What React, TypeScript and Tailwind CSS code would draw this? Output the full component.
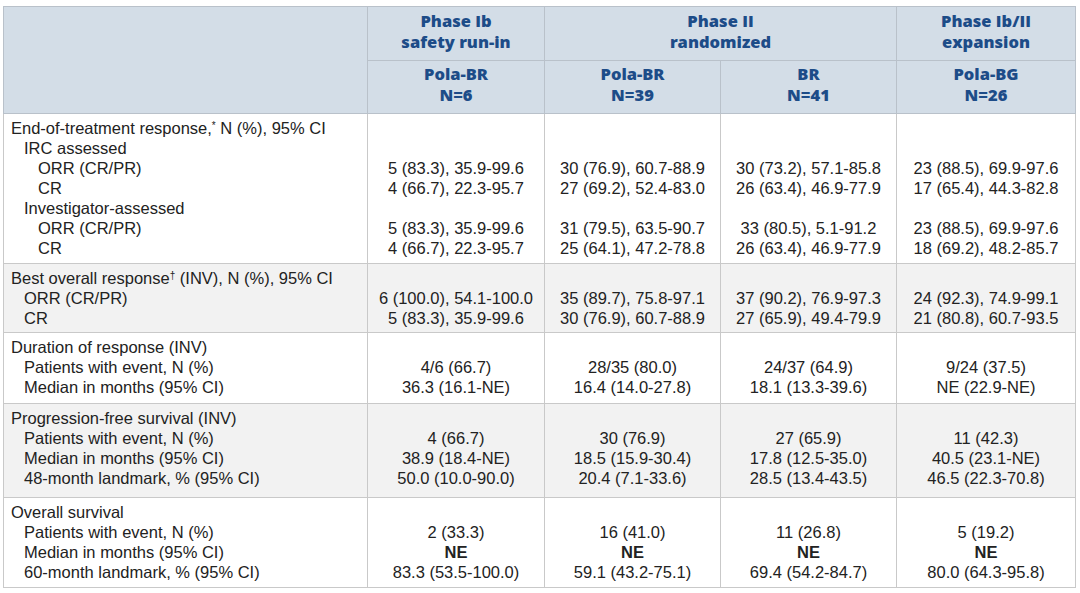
import React from 'react';

type Line = [number, React.ReactNode];

type Section = {
    labels: Line[];
    values: string[][];
    height: string;
    shaded?: boolean;
};

const sections: Section[] = [
    {
        height: 'h-[150px]',
        labels: [
            [0, <>End-of-treatment response,<sup className="text-[10px]">*</sup> N (%), 95% CI</>],
            [1, 'IRC assessed'],
            [2, 'ORR (CR/PR)'],
            [2, 'CR'],
            [1, 'Investigator-assessed'],
            [2, 'ORR (CR/PR)'],
            [2, 'CR'],
        ],
        values: [
            ['', '', '5 (83.3), 35.9-99.6', '4 (66.7), 22.3-95.7', '', '5 (83.3), 35.9-99.6', '4 (66.7), 22.3-95.7'],
            ['', '', '30 (76.9), 60.7-88.9', '27 (69.2), 52.4-83.0', '', '31 (79.5), 63.5-90.7', '25 (64.1), 47.2-78.8'],
            ['', '', '30 (73.2), 57.1-85.8', '26 (63.4), 46.9-77.9', '', '33 (80.5), 5.1-91.2', '26 (63.4), 46.9-77.9'],
            ['', '', '23 (88.5), 69.9-97.6', '17 (65.4), 44.3-82.8', '', '23 (88.5), 69.9-97.6', '18 (69.2), 48.2-85.7'],
        ],
    },
    {
        height: 'h-[69px]',
        shaded: true,
        labels: [
            [0, <>Best overall response<sup className="text-[10px]">†</sup> (INV), N (%), 95% CI</>],
            [1, 'ORR (CR/PR)'],
            [1, 'CR'],
        ],
        values: [
            ['', '6 (100.0), 54.1-100.0', '5 (83.3), 35.9-99.6'],
            ['', '35 (89.7), 75.8-97.1', '30 (76.9), 60.7-88.9'],
            ['', '37 (90.2), 76.9-97.3', '27 (65.9), 49.4-79.9'],
            ['', '24 (92.3), 74.9-99.1', '21 (80.8), 60.7-93.5'],
        ],
    },
    {
        height: 'h-[71px]',
        labels: [
            [0, 'Duration of response (INV)'],
            [1, 'Patients with event, N (%)'],
            [1, 'Median in months (95% CI)'],
        ],
        values: [
            ['', '4/6 (66.7)', '36.3 (16.1-NE)'],
            ['', '28/35 (80.0)', '16.4 (14.0-27.8)'],
            ['', '24/37 (64.9)', '18.1 (13.3-39.6)'],
            ['', '9/24 (37.5)', 'NE (22.9-NE)'],
        ],
    },
    {
        height: 'h-[94px]',
        shaded: true,
        labels: [
            [0, 'Progression-free survival (INV)'],
            [1, 'Patients with event, N (%)'],
            [1, 'Median in months (95% CI)'],
            [1, '48-month landmark, % (95% CI)'],
        ],
        values: [
            ['', '4 (66.7)', '38.9 (18.4-NE)', '50.0 (10.0-90.0)'],
            ['', '30 (76.9)', '18.5 (15.9-30.4)', '20.4 (7.1-33.6)'],
            ['', '27 (65.9)', '17.8 (12.5-35.0)', '28.5 (13.4-43.5)'],
            ['', '11 (42.3)', '40.5 (23.1-NE)', '46.5 (22.3-70.8)'],
        ],
    },
    {
        height: 'h-[90px]',
        labels: [
            [0, 'Overall survival'],
            [1, 'Patients with event, N (%)'],
            [1, 'Median in months (95% CI)'],
            [1, '60-month landmark, % (95% CI)'],
        ],
        values: [
            ['', '2 (33.3)', 'NE', '83.3 (53.5-100.0)'],
            ['', '16 (41.0)', 'NE', '59.1 (43.2-75.1)'],
            ['', '11 (26.8)', 'NE', '69.4 (54.2-84.7)'],
            ['', '5 (19.2)', 'NE', '80.0 (64.3-95.8)'],
        ],
    },
];

const indent = ['pl-0', 'pl-[13px]', 'pl-[27px]'];

const headCell = 'border border-[#b9c1ca] bg-[#d3dde7] px-2 text-center align-top font-extrabold text-[#1d4c88]';

export default function App() {
    return (
        <div className="min-h-[593px] bg-white pl-[3px] pt-[6px]">
            <table className="w-[1072px] table-fixed border-collapse border border-[#c9c9c9] font-['Liberation_Sans',Arial,sans-serif] text-[16.5px] leading-[20px] text-[#222]">
                <colgroup>
                    <col className="w-[364px]" />
                    <col className="w-[177px]" />
                    <col className="w-[176px]" />
                    <col className="w-[176px]" />
                    <col className="w-[179px]" />
                </colgroup>
                <thead className="font-['Open_Sans','Noto_Sans',sans-serif] text-[16.5px] leading-[21px]">
                    <tr className="h-[54px]">
                        <th rowSpan={2} className={headCell} />
                        <th className={`${headCell} pt-[3px]`}>Phase Ib<br />safety run-in</th>
                        <th colSpan={2} className={`${headCell} pt-[3px]`}>Phase II<br />randomized</th>
                        <th className={`${headCell} pt-[3px]`}>Phase Ib/II<br />expansion</th>
                    </tr>
                    <tr className="h-[53px]">
                        <th className={`${headCell} pt-[2px]`}>Pola-BR<br />N=6</th>
                        <th className={`${headCell} pt-[2px]`}>Pola-BR<br />N=39</th>
                        <th className={`${headCell} pt-[2px]`}>BR<br />N=41</th>
                        <th className={`${headCell} pt-[2px]`}>Pola-BG<br />N=26</th>
                    </tr>
                </thead>
                <tbody>
                    {sections.map((s, i) => (
                        <tr key={i} className={`${s.height} ${s.shaded ? 'bg-[#f2f2f2]' : 'bg-white'}`}>
                            <td className="border border-[#c9c9c9] pl-[7px] pt-[4px] align-top">
                                {s.labels.map(([lvl, text], j) => (
                                    <div key={j} className={`${indent[lvl]} whitespace-nowrap`}>{text}</div>
                                ))}
                            </td>
                            {s.values.map((col, c) => (
                                <td key={c} className="border border-[#c9c9c9] pt-[4px] text-center align-top">
                                    {col.map((v, j) => (
                                        <div key={j} className={`whitespace-nowrap ${v === 'NE' ? 'font-bold' : ''}`}>
                                            {v || '\u00a0'}
                                        </div>
                                    ))}
                                </td>
                            ))}
                        </tr>
                    ))}
                </tbody>
            </table>
        </div>
    );
}
